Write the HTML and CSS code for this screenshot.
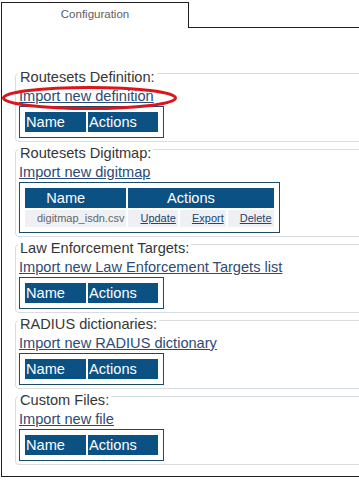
FILE: index.html
```html
<!DOCTYPE html>
<html lang="en">
<head>
    <meta charset="UTF-8">
    <meta name="viewport" content="width=device-width, initial-scale=1.0">
    <title>Configuration</title>
    <link rel="stylesheet" href="styles.css">
</head>
<body>
    <div class="page">
        <!-- Onglets -->
        <div class="tabs">
            <div class="tab">Configuration</div>
            <div class="tab-fill"></div>
        </div>

        <div class="panel">
            <!-- Annotation rouge autour du premier lien -->
            <svg class="mark" viewBox="0 0 180 26" xmlns="http://www.w3.org/2000/svg">
                <ellipse cx="87.5" cy="13" rx="86" ry="10.5" fill="none" stroke="#d9161c" stroke-width="3"></ellipse>
            </svg>

            <div class="group">
                <div class="group-title">Routesets Definition:</div>
                <a href="#" class="import">Import new definition</a>
                <div class="list">
                    <table>
                        <tr><th>Name</th><th>Actions</th></tr>
                    </table>
                </div>
            </div>

            <div class="group">
                <div class="group-title">Routesets Digitmap:</div>
                <a href="#" class="import">Import new digitmap</a>
                <div class="list">
                    <table>
                        <tr><th>Name</th><th colspan="3">Actions</th></tr>
                        <tr>
                            <td class="file">digitmap_isdn.csv</td>
                            <td><a href="#">Update</a></td>
                            <td><a href="#">Export</a></td>
                            <td><a href="#">Delete</a></td>
                        </tr>
                    </table>
                </div>
            </div>

            <div class="group">
                <div class="group-title">Law Enforcement Targets:</div>
                <a href="#" class="import">Import new Law Enforcement Targets list</a>
                <div class="list">
                    <table>
                        <tr><th>Name</th><th>Actions</th></tr>
                    </table>
                </div>
            </div>

            <div class="group">
                <div class="group-title">RADIUS dictionaries:</div>
                <a href="#" class="import">Import new RADIUS dictionary</a>
                <div class="list">
                    <table>
                        <tr><th>Name</th><th>Actions</th></tr>
                    </table>
                </div>
            </div>

            <div class="group">
                <div class="group-title">Custom Files:</div>
                <a href="#" class="import">Import new file</a>
                <div class="list">
                    <table>
                        <tr><th>Name</th><th>Actions</th></tr>
                    </table>
                </div>
            </div>
        </div>
    </div>
</body>
</html>
```

FILE: styles.css
```css
* {
    margin: 0;
    padding: 0;
    box-sizing: border-box;
}

html, body {
    overflow: hidden;
}

body {
    margin: 2px 0 0 1px;
    font-family: "Liberation Sans", Arial, sans-serif;
    font-size: 14.6px;
    color: #333;
    background: #fff;
}

.page {
    width: 430px;
}

/* Tabs */
.tabs {
    display: flex;
    height: 26px;
}

.tab {
    width: 188px;
    border: 1px solid #1e1e1e;
    border-bottom: none;
    padding-top: 4px;
    text-align: center;
    font-size: 11.5px;
    line-height: 14px;
    color: #5e5e5e;
}

.tab-fill {
    flex: 1;
    border-bottom: 1px solid #1e1e1e;
}

/* Panel */
.panel {
    position: relative;
    border: 1px solid #1e1e1e;
    border-top: none;
    padding: 45px 0 4px 13px;
}

.mark {
    position: absolute;
    left: 0;
    top: 57px;
    width: 180px;
    height: 26px;
}

.group {
    border: 1px solid #d8dcdf;
    border-radius: 4px;
    margin-bottom: 7px;
    padding: 0 0 3px 3px;
}

.group-title {
    display: table;
    margin: -5px 0 0 -1px;
    padding: 0 2px;
    background: #fff;
    line-height: 16px;
    color: #363636;
}

.import {
    display: table;
    margin-top: 3px;
    line-height: 16px;
    color: #2c4b75;
}

.list {
    width: fit-content;
    margin-top: 2px;
    border: 1px solid #1c4a68;
    padding: 3px;
}

table {
    border-spacing: 2px;
}

th {
    background-color: #0c5184;
    color: #fff;
    font-weight: normal;
    line-height: 20px;
    padding: 0 21px 0 1px;
    text-align: center;
}

td {
    background-color: #eef0f4;
    font-size: 11px;
    line-height: 17px;
    padding: 0 2px 0 12px;
    color: #666;
}

td a {
    color: #24446e;
}
```
